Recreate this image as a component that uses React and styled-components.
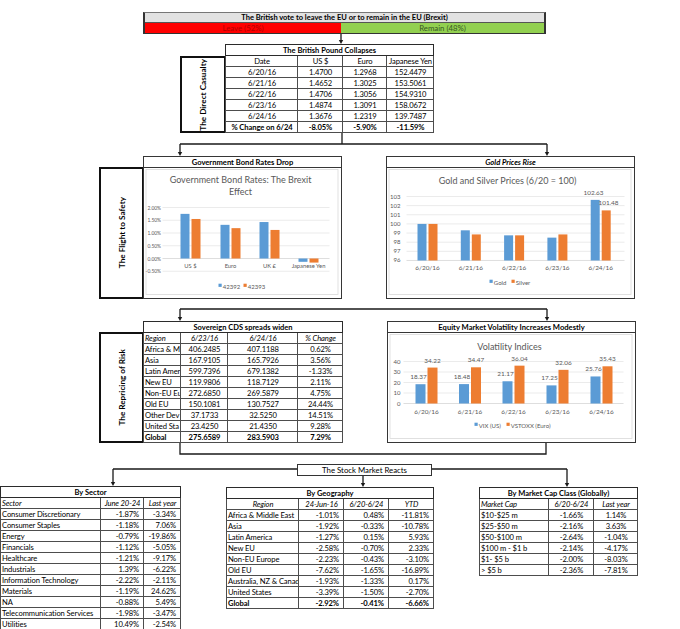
import React from 'react';
import styled, { createGlobalStyle } from 'styled-components';

const BLUE = '#5b9bd5';
const ORANGE = '#ed7d31';
const INK = '#595959';

const GlobalStyle = createGlobalStyle`
  html, body { margin: 0; padding: 0; background: #fff; }
  body { font-family: Lato, "Open Sans", sans-serif; color: #000; }
`;

const Page = styled.div`
  position: relative;
  width: 680px;
  height: 629px;
  overflow: hidden;
  background: #fff;
`;

const Banner = styled.div`
  margin: 12px 0 0 143px;
  width: 403px;
  box-sizing: border-box;
  border-left: 2px solid #333;
  border-right: 2px solid #333;
  border-top: 1px solid #777;
  border-bottom: 1px solid #333;
`;

const BannerTitle = styled.div`
  height: 10px;
  box-sizing: border-box;
  background: #e2e2e2;
  border-bottom: 1px solid #555;
  font-size: 7.5px;
  font-weight: 700;
  line-height: 9px;
  text-align: center;
`;

const BannerSplit = styled.div`
  display: grid;
  grid-template-columns: 196px 1fr;
  height: 10px;
`;

const Vote = styled.div`
  background: ${p => p.$bg};
  color: ${p => p.$fg};
  font-size: 7.8px;
  line-height: 10px;
  text-align: center;
`;

const Row = styled.div`
  display: flex;
  align-items: flex-start;
  height: ${p => p.$h}px;
  margin-top: ${p => p.$top}px;
  padding-left: ${p => p.$left}px;
`;

const SideLabel = styled.div`
  width: ${p => p.$w}px;
  height: ${p => p.$h}px;
  box-sizing: border-box;
  border: 2px solid #111;
  align-self: flex-end;
  flex-shrink: 0;
  display: flex;
  align-items: center;
  justify-content: center;
  margin-right: -1px;

  span {
    writing-mode: vertical-rl;
    transform: rotate(180deg);
    font-size: 8.2px;
    font-weight: 700;
    white-space: nowrap;
  }
`;

const Table = styled.table`
  width: ${p => p.$w}px;
  flex-shrink: 0;
  table-layout: fixed;
  border-collapse: collapse;
  border: 1.5px solid #2b2b2b;
  font-size: 7.6px;
  letter-spacing: -0.1px;
  background: #fff;
  margin-left: ${p => p.$ml || 0}px;
  margin-top: ${p => p.$mt || 0}px;
`;

const Col = styled.col`
  width: ${p => p.$w}px;
`;

const Cell = styled.td`
  height: 10px;
  padding: 0 ${p => (p.$align === 'right' ? 4 : 0)}px 0 1px;
  border: 1px solid #4d4d4d;
  line-height: 9px;
  white-space: nowrap;
  overflow: hidden;
  text-align: ${p => p.$align || 'left'};
  font-style: ${p => (p.$italic ? 'italic' : 'normal')};
  font-weight: ${p => (p.$bold ? 700 : 400)};
`;

const TitleCell = styled.td`
  height: 10px;
  padding: 0;
  border: 1px solid #2b2b2b;
  font-size: 7.5px;
  font-weight: 700;
  letter-spacing: 0;
  line-height: 9px;
  text-align: center;
`;

const Panel = styled.div`
  width: ${p => p.$w}px;
  height: ${p => p.$h}px;
  flex-shrink: 0;
  box-sizing: border-box;
  border: 1.5px solid #363636;
  background: #fff;
  display: flex;
  flex-direction: column;
  margin-left: ${p => p.$ml || 0}px;
`;

const PanelTitle = styled.div`
  height: 11px;
  box-sizing: border-box;
  border-bottom: 1px solid #363636;
  font-size: 7.6px;
  font-weight: 700;
  font-style: ${p => (p.$italic ? 'italic' : 'normal')};
  line-height: 10px;
  text-align: center;
  white-space: nowrap;
`;

const ChartSvg = styled.svg`
  display: block;
  font-family: Lato, "Open Sans", sans-serif;
`;

const Overlay = styled.svg`
  position: absolute;
  left: 0;
  top: 0;
  pointer-events: none;
  z-index: 1;
`;

const StockLabel = styled.div`
  position: absolute;
  left: 297px;
  top: 464px;
  width: 135px;
  height: 12px;
  box-sizing: border-box;
  border: 1px solid #333;
  background: #fff;
  font-size: 7.8px;
  line-height: 10px;
  text-align: center;
  z-index: 2;
`;

function DataTable({ w, cols, title, head, headAlign, headItalic, rows, align, boldLast, ml, mt }) {
  return (
    <Table $w={w} $ml={ml} $mt={mt}>
      <colgroup>
        {cols.map((c, i) => <Col key={i} $w={c} />)}
      </colgroup>
      <tbody>
        <tr><TitleCell colSpan={cols.length}>{title}</TitleCell></tr>
        <tr>
          {head.map((h, i) => (
            <Cell key={i} $align={headAlign[i]} $italic={headItalic}>{h}</Cell>
          ))}
        </tr>
        {rows.map((r, ri) => (
          <tr key={ri}>
            {r.map((c, ci) => (
              <Cell key={ci} $align={align[ci]} $bold={boldLast && ri === rows.length - 1}>{c}</Cell>
            ))}
          </tr>
        ))}
      </tbody>
    </Table>
  );
}

function BarChart({ x, y, w, h, cfg }) {
  const vx = x + 1.5;
  const vy = y + 12.5;
  const vw = w - 3;
  const vh = h - 14;
  const { yOf } = cfg;
  const base = yOf(cfg.base);
  return (
    <ChartSvg width={vw} height={vh} viewBox={`${vx} ${vy} ${vw} ${vh}`}>
      <rect x={vx + 2} y={vy + 1.5} width={vw - 4} height={vh - 4} fill="#fff" stroke="#d9d9d9" strokeWidth="0.8" />
      {cfg.title.map((t, i) => (
        <text key={t} x={cfg.titleX} y={cfg.titleY + i * 12} textAnchor="middle" fontSize="9" fill={INK}>{t}</text>
      ))}
      {cfg.ticks.map(t => (
        <g key={t.label}>
          <line x1={cfg.gx[0]} x2={cfg.gx[1]} y1={yOf(t.v)} y2={yOf(t.v)} stroke={t.v === cfg.base ? '#c8c8c8' : '#dedede'} strokeWidth="0.6" />
          <text x={cfg.tickX} y={yOf(t.v) + 2} textAnchor="end" fontSize={cfg.tickSize} fill={INK}>{t.label}</text>
        </g>
      ))}
      {cfg.cats.map((c, i) => (
        <g key={c.label}>
          {cfg.series.map(s => {
            const v = yOf(s.values[i]);
            return (
              <rect key={s.name} x={c.x + s.dx} y={Math.min(v, base)} width={cfg.barW} height={Math.abs(v - base)} fill={s.color} />
            );
          })}
          <text x={c.x} y={cfg.catY} textAnchor="middle" fontSize={cfg.catSize} fill={INK}>{c.label}</text>
        </g>
      ))}
      {(cfg.valueLabels || []).map(l => (
        <text key={l.t + l.x} x={l.x} y={l.y} textAnchor="middle" fontSize="6.4" fill={INK}>{l.t}</text>
      ))}
      {cfg.series.map(s => (
        <g key={s.name}>
          <rect x={s.lx} y={cfg.legendY - 2.8} width="3.2" height="3.2" fill={s.color} />
          <text x={s.lx + 4.3} y={cfg.legendY + 2} fontSize="6" fill={INK}>{s.name}</text>
        </g>
      ))}
    </ChartSvg>
  );
}

const bondChart = {
  title: ['Government Bond Rates: The Brexit', 'Effect'],
  titleX: 241,
  titleY: 183,
  yOf: v => 259 - v * 25.5,
  base: 0,
  gx: [163, 330],
  tickX: 161.5,
  tickSize: 4.9,
  ticks: [2, 1.5, 1, 0.5, 0, -0.5].map(v => ({ v, label: `${v.toFixed(2)}%` })),
  cats: [
    { x: 191, label: 'US $' },
    { x: 231, label: 'Euro' },
    { x: 270, label: 'UK £' },
    { x: 309, label: 'Japanese Yen' },
  ],
  catY: 268.8,
  catSize: 5.8,
  barW: 9,
  series: [
    { name: '42392', color: BLUE, dx: -10, lx: 219, values: [1.75, 1.32, 1.43, -0.13] },
    { name: '42393', color: ORANGE, dx: 1, lx: 244, values: [1.55, 1.19, 1.12, -0.16] },
  ],
  legendY: 287,
};

const goldChart = {
  title: ['Gold and Silver Prices (6/20 = 100)'],
  titleX: 508,
  titleY: 184,
  yOf: v => 197 + (103 - v) * 9.14,
  base: 96,
  gx: [407, 625],
  tickX: 401,
  tickSize: 6,
  ticks: [103, 102, 101, 100, 99, 98, 97, 96].map(v => ({ v, label: String(v) })),
  cats: ['6/20/16', '6/21/16', '6/22/16', '6/23/16', '6/24/16'].map((label, i) => ({ label, x: 428 + i * 43.3 })),
  catY: 270.5,
  catSize: 6.4,
  barW: 9,
  series: [
    { name: 'Gold', color: BLUE, dx: -10, lx: 490, values: [100, 99.3, 98.75, 98.5, 102.63] },
    { name: 'Silver', color: ORANGE, dx: 1, lx: 512, values: [100, 98.85, 98.75, 98.85, 101.48] },
  ],
  valueLabels: [
    { x: 594, y: 195.5, t: '102.63' },
    { x: 609, y: 205.5, t: '101.48' },
  ],
  legendY: 283,
};

const vix = [18.37, 18.48, 21.17, 17.25, 25.76];
const vstoxx = [34.22, 34.47, 36.04, 32.06, 35.43];
const volX = [426, 469.5, 513, 557, 601];
const volY = v => 404 - v * 1.05;

const volChart = {
  title: ['Volatility Indices'],
  titleX: 509,
  titleY: 350,
  yOf: volY,
  base: 0,
  gx: [403, 623],
  tickX: 400,
  tickSize: 6,
  ticks: [40, 30, 20, 10, 0].map(v => ({ v, label: String(v) })),
  cats: ['6/20/16', '6/21/16', '6/22/16', '6/23/16', '6/24/16'].map((label, i) => ({ label, x: volX[i] })),
  catY: 414.5,
  catSize: 6.4,
  barW: 10,
  series: [
    { name: 'VIX (US)', color: BLUE, dx: -11, lx: 474, values: vix },
    { name: 'VSTOXX (Euro)', color: ORANGE, dx: 1, lx: 506, values: vstoxx },
  ],
  valueLabels: [
    ...vix.map((v, i) => ({ x: volX[i] - 8, y: volY(v) - 5, t: v.toFixed(2) })),
    ...vstoxx.map((v, i) => ({ x: volX[i] + 6, y: volY(v) - 5, t: v.toFixed(2) })),
  ],
  legendY: 426,
};

const poundRows = [
  ['6/20/16', '1.4700', '1.2968', '152.4479'],
  ['6/21/16', '1.4652', '1.3025', '153.5061'],
  ['6/22/16', '1.4706', '1.3056', '154.9310'],
  ['6/23/16', '1.4874', '1.3091', '158.0672'],
  ['6/24/16', '1.3676', '1.2319', '139.7487'],
  ['% Change on 6/24', '-8.05%', '-5.90%', '-11.59%'],
];

// first column is clipped in the source sheet, keep what is visible
const cdsRows = [
  ['Africa & M', '406.2485', '407.1188', '0.62%'],
  ['Asia', '167.9105', '165.7926', '3.56%'],
  ['Latin Amer', '599.7396', '679.1382', '-1.33%'],
  ['New EU', '119.9806', '118.7129', '2.11%'],
  ['Non-EU Eu', '272.6850', '269.5879', '4.75%'],
  ['Old EU', '150.1081', '130.7527', '24.44%'],
  ['Other Dev', '37.1733', '32.5250', '14.51%'],
  ['United Sta', '23.4250', '21.4350', '9.28%'],
  ['Global', '275.6589', '283.5903', '7.29%'],
];

const sectorRows = [
  ['Consumer Discretionary', '-1.87%', '-3.34%'],
  ['Consumer Staples', '-1.18%', '7.06%'],
  ['Energy', '-0.79%', '-19.86%'],
  ['Financials', '-1.12%', '-5.05%'],
  ['Healthcare', '-1.21%', '-9.17%'],
  ['Industrials', '1.39%', '-6.22%'],
  ['Information Technology', '-2.22%', '-2.11%'],
  ['Materials', '-1.19%', '24.62%'],
  ['NA', '-0.88%', '5.49%'],
  ['Telecommunication Services', '-1.98%', '-3.47%'],
  ['Utilities', '10.49%', '-2.54%'],
];

const geoRows = [
  ['Africa & Middle East', '-1.01%', '0.48%', '-11.81%'],
  ['Asia', '-1.92%', '-0.33%', '-10.78%'],
  ['Latin America', '-1.27%', '0.15%', '5.93%'],
  ['New EU', '-2.58%', '-0.70%', '2.33%'],
  ['Non-EU Europe', '-2.23%', '-0.43%', '-3.10%'],
  ['Old EU', '-7.62%', '-1.65%', '-16.89%'],
  ['Australia, NZ & Canad', '-1.93%', '-1.33%', '0.17%'],
  ['United States', '-3.39%', '-1.50%', '-2.70%'],
  ['Global', '-2.92%', '-0.41%', '-6.66%'],
];

const capRows = [
  ['$10-$25 m', '-1.66%', '1.14%'],
  ['$25-$50 m', '-2.16%', '3.63%'],
  ['$50-$100 m', '-2.64%', '-1.04%'],
  ['$100 m  - $1 b', '-2.14%', '-4.17%'],
  ['$1- $5 b', '-2.00%', '-8.03%'],
  ['> $5 b', '-2.36%', '-7.81%'],
];

const LINES = [
  'M341 34 V41',
  'M342 133 V144 M180 144 H547 M180 144 V153 M547 144 V153',
  'M180 309 H547 M180 309 V318 M547 309 V318',
  'M180 443 V454 H546 V443',
  'M113 469 H300 M430 469 H567 M113 469 V483 M567 469 V484 M363 476 V484',
];

const ARROWS = [[341, 44], [180, 156], [547, 156], [180, 321], [547, 321], [113, 486], [567, 487], [363, 487]];

function Connectors() {
  return (
    <Overlay width="680" height="629" viewBox="0 0 680 629">
      {LINES.map(d => <path key={d} d={d} fill="none" stroke="#1a1a1a" strokeWidth="1.3" />)}
      {ARROWS.map(([x, y]) => (
        <polygon key={`${x}-${y}`} points={`${x - 2.2},${y - 4} ${x + 2.2},${y - 4} ${x},${y}`} fill="#1a1a1a" />
      ))}
    </Overlay>
  );
}

export default function App() {
  return (
    <Page>
      <GlobalStyle />
      <Banner>
        <BannerTitle>The British vote to leave the EU or to remain in the EU (Brexit)</BannerTitle>
        <BannerSplit>
          <Vote $bg="#ff0000" $fg="#b00000">Leave (52%)</Vote>
          <Vote $bg="#92d050" $fg="#375623">Remain (48%)</Vote>
        </BannerSplit>
      </Banner>

      <Row $top={10} $h={89} $left={180}>
        <SideLabel $w={46} $h={77}><span>The Direct Casualty</span></SideLabel>
        <DataTable
          w={208}
          cols={[72, 45, 44, 47]}
          title="The British Pound Collapses"
          head={['Date', 'US $', 'Euro', 'Japanese Yen']}
          headAlign={['center', 'center', 'center', 'center']}
          rows={poundRows}
          align={['center', 'center', 'center', 'center']}
          boldLast
        />
      </Row>

      <Row $top={23} $h={143} $left={99}>
        <SideLabel $w={45} $h={132}><span>The Flight to Safety</span></SideLabel>
        <Panel $w={199} $h={143}>
          <PanelTitle>Government Bond Rates Drop</PanelTitle>
          <BarChart x={143} y={156} w={199} h={143} cfg={bondChart} />
        </Panel>
        <Panel $w={249} $h={143} $ml={44}>
          <PanelTitle $italic>Gold Prices Rise</PanelTitle>
          <BarChart x={386} y={156} w={249} h={143} cfg={goldChart} />
        </Panel>
      </Row>

      <Row $top={22} $h={122} $left={99}>
        <SideLabel $w={45} $h={111}><span>The Repricing of Risk</span></SideLabel>
        <DataTable
          w={199}
          cols={[37, 47, 70, 45]}
          title="Sovereign CDS spreads widen"
          head={['Region', '6/23/16', '6/24/16', '% Change']}
          headAlign={['left', 'center', 'center', 'center']}
          headItalic
          rows={cdsRows}
          align={['left', 'center', 'center', 'center']}
          boldLast
        />
        <Panel $w={249} $h={122} $ml={44}>
          <PanelTitle>Equity Market Volatility Increases Modestly</PanelTitle>
          <BarChart x={386} y={321} w={249} h={122} cfg={volChart} />
        </Panel>
      </Row>

      <Row $top={43} $h={143} $left={0}>
        <DataTable
          w={180}
          cols={[100, 43, 37]}
          title="By Sector"
          head={['Sector', 'June 20-24', 'Last year']}
          headAlign={['left', 'center', 'center']}
          headItalic
          rows={sectorRows}
          align={['left', 'right', 'right']}
        />
        <DataTable
          w={207}
          cols={[72, 45, 45, 45]}
          title="By Geography"
          head={['Region', '24-Jun-16', '6/20-6/24', 'YTD']}
          headAlign={['center', 'center', 'center', 'center']}
          headItalic
          rows={geoRows}
          align={['left', 'right', 'right', 'right']}
          boldLast
          ml={45}
          mt={1}
        />
        <DataTable
          w={158}
          cols={[69, 45, 44]}
          title="By Market Cap Class (Globally)"
          head={['Market Cap', '6/20-6/24', 'Last year']}
          headAlign={['left', 'center', 'center']}
          headItalic
          rows={capRows}
          align={['left', 'center', 'center']}
          ml={45}
          mt={1}
        />
      </Row>

      <Connectors />
      <StockLabel>The Stock Market Reacts</StockLabel>
    </Page>
  );
}
